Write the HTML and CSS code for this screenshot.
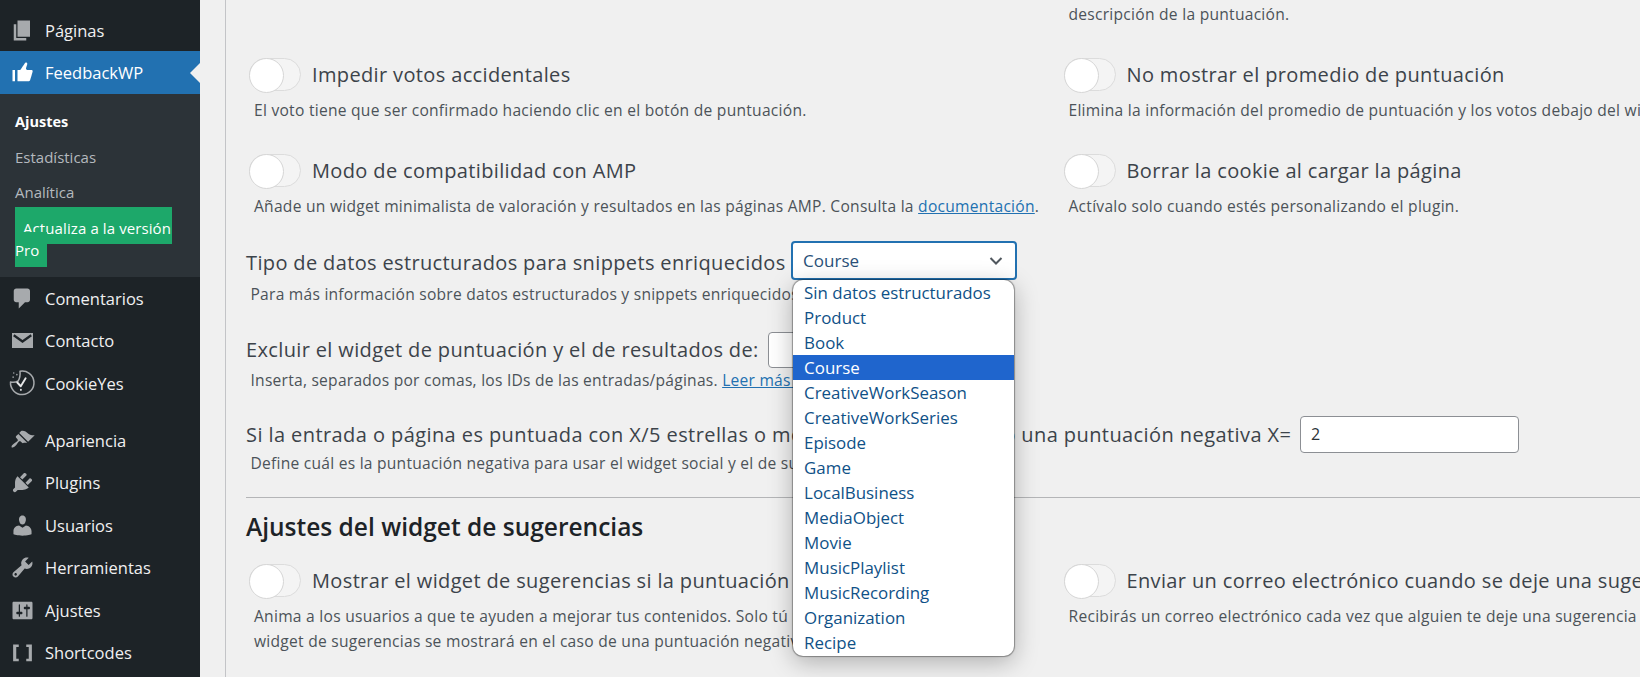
FILE: index.html
```html
<!DOCTYPE html>
<html lang="es">
<head>
<meta charset="utf-8">
<title>FeedbackWP Ajustes</title>
<link rel="stylesheet" href="styles.css">
</head>
<body>
<div class="app">
  <aside class="sidebar">
    <a class="item"><svg class="ico" viewBox="0 0 20 20"><path d="M6 15V2h10v13H6zm-1 1h8v2H3V5h2v11z"/></svg>Páginas</a>
    <a class="item active"><svg class="ico" viewBox="0 0 20 20"><path d="M12.720 2c.15-.02.26.02.41.07.56.19.83.79.66 1.350-.17.55-1 3.040-1 3.580 0 .53.75 1 1.350 1h3c.6 0 1 .4 1 1s-2 7-2 7c-.17.39-.55 1-1 1H6V8h2.140c.41-.41 3.300-4.710 3.580-5.270.21-.41.6-.68 1-.73zM2 8h2v9H2V8z"/></svg>FeedbackWP</a>
    <div class="sub">
      <a class="sub-item current">Ajustes</a>
      <a class="sub-item">Estadísticas</a>
      <a class="sub-item">Analítica</a>
      <a class="upgrade upgrade-first">Actualiza a la versión</a>
      <a class="upgrade upgrade-second">Pro</a>
    </div>
    <a class="item"><svg class="ico" viewBox="0 0 20 20"><path d="M5 2h9c1.100 0 2 .9 2 2v7c0 1.100-.9 2-2 2h-2l-5 5v-5H5c-1.100 0-2-.9-2-2V4c0-1.100.9-2 2-2z"/></svg>Comentarios</a>
    <a class="item"><svg class="ico" viewBox="0 0 20 20"><path d="M1.600 4h16.800v12H1.600z"/><path class="cut" d="M3 5.800l7 5 7-5"/></svg>Contacto</a>
    <a class="item"><svg class="ico ico-line" viewBox="0 0 20 20"><path d="M8 .2A9.400 9.400 0 1 1 .4 8.800Q4 9.500 6.500 8 8.500 5 8 .2z"/><path class="tick" d="M5.800 9.200l2.800 3 3.900-6.400"/><path class="tick" d="M8.700 15v.1"/><path d="M3 1.500v.1M5.500 2.800v.1M2.500 4.800v.1"/></svg>CookieYes</a>
    <div class="sep"></div>
    <a class="item"><svg class="ico" viewBox="0 0 20 20"><path d="M14.480 11.060L7.410 3.990l1.500-1.500c.5-.56 2.300-.47 3.510.32 1.210.8 1.430 1.280 2.910 2.100 1.180.64 2.450 1.260 4.450.85zm-.71.71L6.700 4.700 4.930 6.470c-.39.39-.39 1.020 0 1.410l1.060 1.060c.39.39.39 1.030 0 1.420-.6.6-1.430 1.110-2.210 1.690-.35.26-.7.53-1.010.84C1.430 13.710.96 15.120 1.370 15.530c.41.41 1.820-.06 3.240-1.480.31-.31.58-.66.84-1.010.58-.78 1.090-1.610 1.690-2.210.39-.39 1.030-.39 1.420 0l1.060 1.060c.39.39 1.020.39 1.410 0z"/></svg>Apariencia</a>
    <a class="item"><svg class="ico" viewBox="0 0 20 20"><path d="M13.110 4.360L9.870 7.600 8 5.730l3.240-3.240c.35-.34 1.050-.2 1.560.32.52.51.66 1.210.31 1.550zm-8 1.770l.91-1.120 9.010 9.010-1.190.84c-.71.71-2.630 1.160-3.820 1.160H6.140L4.900 17.260c-.59.59-1.540.59-2.120 0-.59-.58-.59-1.530 0-2.120l1.240-1.240v-3.880c0-1.130.4-3.190 1.090-3.890zm7.260 3.970l3.240-3.240c.34-.35 1.040-.21 1.550.31.52.51.66 1.210.31 1.550l-3.240 3.250z"/></svg>Plugins</a>
    <a class="item"><svg class="ico" viewBox="0 0 20 20"><path d="M10 9.250c-2.270 0-2.730-3.440-2.730-3.440C7 4.020 7.820 2 9.970 2c2.160 0 2.980 2.020 2.710 3.810 0 0-.41 3.440-2.680 3.440zm0 2.570L12.720 10c2.390 0 4.520 2.330 4.520 4.530v2.490s-3.650 1.130-7.240 1.130c-3.650 0-7.240-1.130-7.240-1.130v-2.490c0-2.250 1.940-4.480 4.470-4.480z"/></svg>Usuarios</a>
    <a class="item"><svg class="ico" viewBox="0 0 20 20"><path d="M16.680 9.770c-1.340 1.340-3.300 1.670-4.950.99l-5.410 6.520c-.99.99-2.590.99-3.580 0s-.99-2.590 0-3.570l6.520-5.420c-.68-1.650-.35-3.610.99-4.950 1.280-1.280 3.120-1.620 4.720-1.060l-2.890 2.890 2.820 2.820 2.860-2.870c.53 1.580.18 3.390-1.080 4.650zM3.810 16.210c.4.39 1.040.39 1.430 0 .4-.4.4-1.040 0-1.430-.39-.4-1.030-.4-1.430 0-.39.39-.39 1.030 0 1.430z"/></svg>Herramientas</a>
    <a class="item"><svg class="ico" viewBox="0 0 20 20"><path d="M18 16V4c0-.55-.45-1-1-1H3c-.55 0-1 .45-1 1v12c0 .55.45 1 1 1h14c.55 0 1-.45 1-1zM8 11h1c.55 0 1 .45 1 1s-.45 1-1 1H8v1.500c0 .28-.22.5-.5.5s-.5-.22-.5-.5V13H6c-.55 0-1-.45-1-1s.45-1 1-1h1V5.500c0-.28.22-.5.5-.5s.5.22.5.5V11zm5-2h-1c-.55 0-1-.45-1-1s.45-1 1-1h1V5.500c0-.28.22-.5.5-.5s.5.22.5.5V7h1c.55 0 1 .45 1 1s-.45 1-1 1h-1v5.500c0 .28-.22.5-.5.5s-.5-.22-.5-.5V9z"/></svg>Ajustes</a>
    <a class="item"><svg class="ico" viewBox="0 0 20 20"><path d="M7 17H2.500V3.500H7v2H5v9.500h2zM13 3.500h4.500V17H13v-2h2V5.500h-2z"/></svg>Shortcodes</a>
  </aside>

  <main class="main">
    <div class="cols top-cols">
      <div></div>
      <p class="desc">descripción de la puntuación.</p>
    </div>

    <div class="cols">
      <div class="opt">
        <div class="opt-head"><span class="toggle"></span><span class="opt-label">Impedir votos accidentales</span></div>
        <p class="desc">El voto tiene que ser confirmado haciendo clic en el botón de puntuación.</p>
      </div>
      <div class="opt">
        <div class="opt-head"><span class="toggle"></span><span class="opt-label">No mostrar el promedio de puntuación</span></div>
        <p class="desc">Elimina la información del promedio de puntuación y los votos debajo del widget</p>
      </div>
      <div class="opt">
        <div class="opt-head"><span class="toggle"></span><span class="opt-label">Modo de compatibilidad con AMP</span></div>
        <p class="desc">Añade un widget minimalista de valoración y resultados en las páginas AMP. Consulta la <a class="link">documentación</a>.</p>
      </div>
      <div class="opt">
        <div class="opt-head"><span class="toggle"></span><span class="opt-label">Borrar la cookie al cargar la página</span></div>
        <p class="desc">Actívalo solo cuando estés personalizando el plugin.</p>
      </div>
    </div>

    <div class="field field-select">
      <div class="field-row">
        <span class="field-label">Tipo de datos estructurados para snippets enriquecidos</span>
        <div class="select-wrap">
          <div class="select">Course<svg class="chev" viewBox="0 0 16 16"><path d="M2.500 5l5.500 5.500L13.500 5"/></svg></div>
          <ul class="popup">
            <li>Sin datos estructurados</li>
            <li>Product</li>
            <li>Book</li>
            <li class="sel">Course</li>
            <li>CreativeWorkSeason</li>
            <li>CreativeWorkSeries</li>
            <li>Episode</li>
            <li>Game</li>
            <li>LocalBusiness</li>
            <li>MediaObject</li>
            <li>Movie</li>
            <li>MusicPlaylist</li>
            <li>MusicRecording</li>
            <li>Organization</li>
            <li>Recipe</li>
          </ul>
        </div>
      </div>
      <p class="field-desc">Para más información sobre datos estructurados y snippets enriquecidos</p>
    </div>

    <div class="field field-exclude">
      <div class="field-row">
        <span class="field-label">Excluir el widget de puntuación y el de resultados de:</span>
        <div class="input input-ids"></div>
      </div>
      <p class="field-desc">Inserta, separados por comas, los IDs de las entradas/páginas. <a class="link">Leer más »</a></p>
    </div>

    <div class="field field-neg">
      <div class="field-row">
        <span class="field-label">Si la entrada o página es puntuada con X/5 estrellas o menos, se valorará como una puntuación negativa X=</span>
        <div class="input input-neg">2</div>
      </div>
      <p class="field-desc">Define cuál es la puntuación negativa para usar el widget social y el de sugerencias.</p>
    </div>

    <hr class="rule">
    <h2 class="section-title">Ajustes del widget de sugerencias</h2>

    <div class="cols">
      <div class="opt">
        <div class="opt-head"><span class="toggle"></span><span class="opt-label">Mostrar el widget de sugerencias si la puntuación es negativa</span></div>
        <p class="desc">Anima a los usuarios a que te ayuden a mejorar tus contenidos. Solo tú podrás<br>widget de sugerencias se mostrará en el caso de una puntuación negativa.</p>
      </div>
      <div class="opt">
        <div class="opt-head"><span class="toggle"></span><span class="opt-label">Enviar un correo electrónico cuando se deje una sugerencia</span></div>
        <p class="desc">Recibirás un correo electrónico cada vez que alguien te deje una sugerencia</p>
      </div>
    </div>
  </main>
</div>
</body>
</html>
```

FILE: styles.css
```css
* { box-sizing: border-box; }
html, body { margin: 0; height: 100%; overflow: hidden; }
body { background: #f0f0f0; font-family: "Open Sans", "Noto Sans", sans-serif; color: #3c434a; }
p, ul, h2 { margin: 0; padding: 0; }

.app { display: flex; width: 1640px; height: 677px; overflow: hidden; }

.sidebar { flex: 0 0 200px; background: #1d2327; padding-top: 8.5px; }
.item { position: relative; display: flex; align-items: center; height: 42.5px; padding-left: 10px; color: #f0f0f1; font-size: 16.5px; white-space: nowrap; }
.item:first-child { padding-top: 2px; }
.ico { flex: 0 0 25px; width: 25px; height: 25px; margin-right: 10px; fill: #a7aaad; }
.ico .cut { fill: none; stroke: #1d2327; stroke-width: 1.8; }
.ico-line { fill: none; stroke: #a7aaad; stroke-width: 1.2; stroke-linecap: round; stroke-linejoin: round; overflow: visible; }
.ico-line .tick { stroke: #e6e7e8; stroke-width: 1.5; }
.active { background: #2271b1; color: #fff; height: 43px; }
.active .ico { fill: #fff; }
.active::after { content: ""; position: absolute; right: 0; top: 50%; margin-top: -10px; border: 10px solid transparent; border-right-color: #f0f0f0; border-left-width: 0; }
.sub { background: #2c3338; padding: 10px 0 10px; height: 183px; font-size: 15px; }
.sub-item { display: block; height: 35.5px; line-height: 34.5px; padding-left: 15px; color: #b4b9be; }
.current { color: #fff; font-weight: 700; font-size: 14.5px; line-height: 36px; }
.upgrade { display: block; width: fit-content; background: #1da86a; color: #fff; white-space: nowrap; }
.upgrade-first { margin-top: -3.5px; height: 37px; line-height: 42px; padding: 0 0 0 8px; width: 157px; margin-left: 15px; letter-spacing: .1px; overflow: hidden; }
.upgrade-second { position: relative; margin-top: -12px; margin-left: 15px; width: 32px; height: 35px; padding-top: 7px; line-height: 23px; }
.sep { height: 14px; }
.sep ~ .item { padding-top: .8px; }

.main { flex: 0 0 auto; width: 1415px; margin-left: 25px; border-left: 1px solid #c3c4c7; padding-left: 20px; font-size: 15.6px; }
.cols { display: grid; grid-template-columns: 814.5px 600px; }
.top-cols { height: 58px; padding-top: 1.5px; }
.opt { height: 96px; padding-left: 3px; }
.opt-head { display: flex; align-items: center; height: 33px; gap: 11px; }
.toggle { position: relative; flex: 0 0 52px; width: 52px; height: 33px; border: 1px solid #dcdcdc; border-radius: 17px; background: #f4f4f4; }
.toggle::after { content: ""; position: absolute; left: -1px; top: -1px; width: 33px; height: 33px; border: 1px solid #d6d6d6; border-radius: 50%; background: #fff; }
.opt-label { font-size: 20px; letter-spacing: .36px; white-space: nowrap; color: #3c434a; }
.desc { margin-top: 7px; padding-left: 5px; line-height: 25px; font-size: 15.6px; letter-spacing: .26px; white-space: nowrap; color: #4c5359; }
.top-cols .desc { margin-top: 0; padding-left: 8px; }
.link { color: #2271b1; text-decoration: underline; }

.field-row { display: flex; align-items: center; gap: 7px; white-space: nowrap; }
.field-label { font-size: 20px; letter-spacing: .36px; color: #3c434a; }
.field-desc { padding-left: 4.5px; line-height: 25px; font-size: 15.6px; letter-spacing: .24px; white-space: nowrap; color: #4c5359; }
.field-select { margin-top: -9.5px; }
.field-select .field-row { height: 39px; gap: 5.5px; }
.field-select .field-label { margin-top: 4px; }
.field-select .field-desc { margin-top: 2px; }
.field-exclude { margin-top: 25px; }
.field-exclude .field-row { height: 36px; gap: 9px; }
.field-neg { margin-top: 23px; }
.field-neg .field-row { height: 37px; gap: 8.5px; }
.field-neg .field-label { letter-spacing: .42px; }
.field-neg .field-desc { margin-top: -2px; }

.select-wrap { position: relative; z-index: 2; }
.select { display: flex; align-items: center; justify-content: space-between; width: 226px; height: 39px; padding: 1px 11px 0 10px; background: #fff; border: 2px solid #2271b1; border-radius: 4px; color: #2a5078; font-size: 17px; }
.chev { width: 16px; height: 16px; fill: none; stroke: #50575e; stroke-width: 2; }
.popup { position: absolute; left: 2px; top: 39px; width: 221px; list-style: none; background: #fff; border-radius: 10px; box-shadow: 0 0 1px 1px rgba(0,0,0,.35), 0 6px 24px rgba(0,0,0,.28); overflow: hidden; padding-bottom: 1px; }
.popup li { height: 25px; line-height: 25px; padding-left: 11px; font-size: 16.9px; color: #0f5187; }
.popup .sel { background: #1f65cd; color: #fff; }

.input { background: #fff; border: 1px solid #8c8f94; border-radius: 4px; color: #2c3338; font-size: 16px; }
.input-ids { width: 218px; height: 36px; }
.input-neg { display: flex; align-items: center; width: 219px; height: 37px; padding-left: 10px; }

.rule { margin: 21px 0 0; border: 0; border-top: 1px solid #b4b5b7; }
.section-title { margin: 12px 0 21px; height: 33px; line-height: 33px; font-size: 24.5px; font-weight: 600; color: #1d2327; }
```
